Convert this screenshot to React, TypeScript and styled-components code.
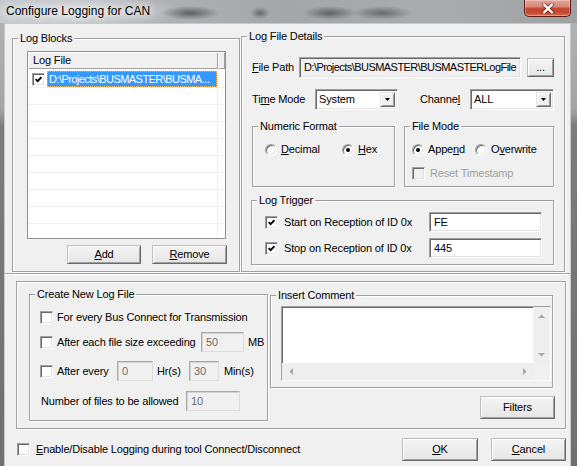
import React from "react";
import styled, { createGlobalStyle } from "styled-components";

const GlobalStyle = createGlobalStyle`
  html, body { margin: 0; padding: 0; }
  body { background: #6e6e6e; font-family: "Liberation Sans", Arial, sans-serif; }
  *, *::before, *::after { box-sizing: border-box; }
  u { text-decoration: underline; text-underline-offset: 1px; }
`;

const Window = styled.div`
  width: 577px;
  height: 466px;
  display: flex;
  flex-direction: column;
  overflow: hidden;
  background: linear-gradient(180deg, #b4b5b6 0px, #a3a4a5 110px, #7b7c7d 126px, #6f7071 100%);
`;

const TitleBar = styled.div`
  height: 23px;
  flex: none;
  display: flex;
  align-items: flex-start;
  background:
    radial-gradient(30px 7px at 190px 13px, rgba(40, 40, 40, 0.6), rgba(40, 40, 40, 0)),
    radial-gradient(10px 6px at 260px 13px, rgba(40, 40, 40, 0.5), rgba(40, 40, 40, 0)),
    radial-gradient(27px 7px at 330px 13px, rgba(40, 40, 40, 0.55), rgba(40, 40, 40, 0)),
    radial-gradient(30px 7px at 382px 13px, rgba(40, 40, 40, 0.5), rgba(40, 40, 40, 0)),
    radial-gradient(110px 18px at 75px 12px, rgba(226, 229, 231, 0.95), rgba(226, 229, 231, 0)),
    linear-gradient(90deg, #c3c6c8 0%, #b0b3b5 26%, #a4a6a8 50%, #aaacae 75%, #9fa1a3 100%);
`;

const TitleText = styled.div`
  flex: 1;
  padding-left: 6px;
  line-height: 23px;
  font-size: 12px;
  color: #000;
  white-space: nowrap;
  text-shadow: 0 0 6px rgba(255, 255, 255, 0.9), 0 0 10px rgba(255, 255, 255, 0.7);
`;

const CloseButton = styled.div`
  width: 47px;
  height: 17px;
  flex: none;
  margin-right: 6px;
  display: flex;
  align-items: center;
  justify-content: center;
  border: 1px solid #5e1d14;
  border-top: none;
  border-radius: 0 0 5px 5px;
  background: linear-gradient(180deg, #e3a397 0%, #d98a79 40%, #c2442b 55%, #c54a31 80%, #d6755c 100%);
  box-shadow: inset 0 0 0 1px rgba(255, 255, 255, 0.3);
`;

const Body = styled.div`
  flex: 1;
  min-height: 0;
  display: flex;
  padding: 0 6px 0 4px;
`;

const Client = styled.div`
  flex: 1;
  display: flex;
  flex-direction: column;
  background: #f0f0f0;
  border: 1px solid #c8c9ca;
  border-bottom: none;
  font-size: 11px;
  line-height: 13px;
  letter-spacing: -0.15px;
  color: #000;
`;

const TopPanel = styled.div`
  height: 250px;
  flex: none;
  display: flex;
  align-items: flex-end;
  gap: 1px;
  padding: 0 5px 1px 7px;
  border-bottom: 1px solid #a0a0a0;
  box-shadow: 0 1px 0 #fff;
`;

const GroupBox = styled.div<{ $w: number; $h: number; $mt?: number; $ml?: number }>`
  width: ${(p) => p.$w}px;
  height: ${(p) => p.$h}px;
  margin-top: ${(p) => p.$mt ?? 0}px;
  margin-left: ${(p) => p.$ml ?? 0}px;
  flex: none;
  display: flex;
  flex-direction: column;
  border: 1px solid #a0a0a0;
  box-shadow: inset 1px 1px 0 #fff, 1px 1px 0 #fff;
`;

const Legend = styled.div`
  align-self: flex-start;
  margin: -7px 0 0 5px;
  padding: 0 2px;
  line-height: 13px;
  background: #f0f0f0;
  white-space: nowrap;
`;

const GroupContent = styled.div<{ $p: string }>`
  padding: ${(p) => p.$p};
  display: flex;
  flex-direction: column;
  flex: 1;
  min-height: 0;
`;

const ListView = styled.div`
  width: 199px;
  height: 188px;
  flex: none;
  display: flex;
  flex-direction: column;
  background: #fff;
  border: 1px solid #8e8f8f;
  overflow: hidden;
`;

const ListHeader = styled.div`
  display: flex;
  height: 17px;
  flex: none;
`;

const HeaderCell = styled.div<{ $w?: number }>`
  ${(p) => (p.$w ? `width: ${p.$w}px; flex: none;` : "flex: 1;")}
  height: 100%;
  padding-left: 5px;
  display: flex;
  align-items: center;
  background: #f0f0f0;
  box-shadow: inset 1px 1px 0 #fff, inset -1px -1px 0 #a0a0a0;
`;

const ListBody = styled.div`
  display: flex;
  flex-direction: column;
  padding-top: 2px;
`;

const ListRow = styled.div`
  display: flex;
  height: 17px;
  flex: none;
  border-bottom: 1px solid #f0f0f0;
`;

const ListCell = styled.div<{ $w?: number }>`
  ${(p) => (p.$w ? `width: ${p.$w}px; flex: none; border-right: 1px solid #f0f0f0;` : "flex: 1;")}
  display: flex;
  align-items: center;
  padding-left: 4px;
  min-width: 0;
`;

const SelectedText = styled.div`
  flex: 1;
  min-width: 0;
  height: 16px;
  margin-left: 2px;
  padding-left: 2px;
  display: flex;
  align-items: center;
  background: #3399ff;
  color: #fff;
  letter-spacing: -0.55px;
  white-space: nowrap;
  overflow: hidden;
  outline: 1px dotted #f6b565;
  outline-offset: -1px;
`;

const ButtonRow = styled.div`
  display: flex;
  gap: 11px;
  margin-top: 6px;
  padding-left: 40px;
`;

const Button = styled.div<{ $w: number; $h: number; $ml?: number | "auto" }>`
  width: ${(p) => p.$w}px;
  height: ${(p) => p.$h}px;
  margin-left: ${(p) => (p.$ml === "auto" ? "auto" : `${p.$ml ?? 0}px`)};
  flex: none;
  display: flex;
  align-items: center;
  justify-content: center;
  background: linear-gradient(180deg, #f4f4f4, #e6e6e6);
  border: 1px solid;
  border-color: #bdbdbd #6a6a6a #6a6a6a #bdbdbd;
  box-shadow: inset 1px 1px 0 #fff, inset -1px -1px 0 #a0a0a0;
  white-space: nowrap;
`;

const FieldRow = styled.div<{ $mt?: number; $pl?: number; $h?: number }>`
  display: flex;
  align-items: center;
  height: ${(p) => p.$h ?? 20}px;
  margin-top: ${(p) => p.$mt ?? 0}px;
  padding-left: ${(p) => p.$pl ?? 0}px;
  flex: none;
`;

const Text = styled.span<{ $w?: number; $ml?: number; $disabled?: boolean }>`
  ${(p) => (p.$w ? `width: ${p.$w}px; flex: none;` : "")}
  margin-left: ${(p) => p.$ml ?? 0}px;
  color: ${(p) => (p.$disabled ? "#a0a0a0" : "#000")};
  white-space: nowrap;
`;

const TextField = styled.div<{ $w: number; $h: number; $disabled?: boolean; $readonly?: boolean; $tight?: boolean }>`
  width: ${(p) => p.$w}px;
  height: ${(p) => p.$h}px;
  flex: none;
  display: flex;
  align-items: center;
  padding: 0 4px;
  overflow: hidden;
  white-space: nowrap;
  letter-spacing: ${(p) => (p.$tight ? "-0.55px" : "inherit")};
  background: ${(p) => (p.$disabled || p.$readonly ? "#f0f0f0" : "#fff")};
  color: ${(p) => (p.$disabled ? "#6d6d6d" : "#000")};
  border: 1px solid;
  border-color: ${(p) => (p.$disabled ? "#a9a9a9 #dcdcdc #dcdcdc #a9a9a9" : "#a0a0a0 #fff #fff #a0a0a0")};
  box-shadow: ${(p) =>
    p.$disabled ? "inset 1px 1px 0 #d4d4d4" : "inset 1px 1px 0 #696969, inset -1px -1px 0 #e3e3e3"};
`;

const Combo = styled.div<{ $w: number; $ml?: number }>`
  width: ${(p) => p.$w}px;
  height: 21px;
  margin-left: ${(p) => p.$ml ?? 0}px;
  flex: none;
  display: flex;
  align-items: stretch;
  padding: 2px;
  background: #fff;
  border: 1px solid;
  border-color: #a0a0a0 #fff #fff #a0a0a0;
  box-shadow: inset 1px 1px 0 #696969, inset -1px -1px 0 #e3e3e3;
`;

const ComboText = styled.span`
  flex: 1;
  padding-left: 1px;
  display: flex;
  align-items: center;
`;

const DropButton = styled.span`
  width: 15px;
  flex: none;
  display: flex;
  align-items: center;
  justify-content: center;
  background: #f0f0f0;
  border: 1px solid;
  border-color: #e3e3e3 #696969 #696969 #e3e3e3;
  box-shadow: inset 1px 1px 0 #fff, inset -1px -1px 0 #a0a0a0;
`;

const GroupsRow = styled.div`
  display: flex;
  gap: 9px;
  margin-top: 16px;
  flex: none;
`;

const RadioOption = styled.div<{ $w?: number }>`
  display: flex;
  align-items: center;
  gap: 4px;
  ${(p) => (p.$w ? `width: ${p.$w}px; flex: none;` : "")}
`;

const RadioCircle = styled.span<{ $on?: boolean }>`
  width: 12px;
  height: 12px;
  flex: none;
  border-radius: 50%;
  background: #fff;
  border: 1px solid;
  border-color: #a0a0a0 #fff #fff #a0a0a0;
  box-shadow: inset 1px 1px 0 #696969, inset -1px -1px 0 #e3e3e3;
  display: flex;
  align-items: center;
  justify-content: center;
  &::after {
    content: "";
    width: 4px;
    height: 4px;
    border-radius: 50%;
    background: #000;
    display: ${(p) => (p.$on ? "block" : "none")};
  }
`;

const CheckBox = styled.span<{ $disabled?: boolean }>`
  width: 13px;
  height: 13px;
  flex: none;
  display: flex;
  align-items: center;
  justify-content: center;
  background: ${(p) => (p.$disabled ? "#f0f0f0" : "#fff")};
  border: 1px solid;
  border-color: #a0a0a0 #fff #fff #a0a0a0;
  box-shadow: inset 1px 1px 0 #696969, inset -1px -1px 0 #e3e3e3;
`;

const BottomPanel = styled.div`
  width: 550px;
  height: 148px;
  flex: none;
  margin: 7px 0 0 11px;
  display: flex;
  align-items: flex-start;
  gap: 2px;
  padding-left: 12px;
  border: 1px solid #a0a0a0;
  box-shadow: inset 1px 1px 0 #fff, 1px 1px 0 #fff;
`;

const RightColumn = styled.div`
  width: 285px;
  flex: none;
  margin-top: 13px;
  display: flex;
  flex-direction: column;
  align-items: flex-start;
`;

const CommentArea = styled.div`
  width: 270px;
  height: 75px;
  flex: none;
  display: flex;
  flex-direction: column;
  background: #fff;
  border: 1px solid;
  border-color: #a0a0a0 #fff #fff #a0a0a0;
  box-shadow: inset 1px 1px 0 #696969, inset -1px -1px 0 #e3e3e3;
`;

const CommentMain = styled.div`
  flex: 1;
  display: flex;
  justify-content: flex-end;
`;

const VScroll = styled.div`
  width: 17px;
  display: flex;
  flex-direction: column;
  justify-content: space-between;
  background: #eeeeee;
`;

const HScrollRow = styled.div`
  height: 17px;
  flex: none;
  display: flex;
`;

const HScroll = styled.div`
  flex: 1;
  display: flex;
  justify-content: space-between;
  background: #eeeeee;
`;

const ScrollBtn = styled.span`
  width: 17px;
  height: 17px;
  flex: none;
  display: flex;
  align-items: center;
  justify-content: center;
`;

const ScrollCorner = styled.span`
  width: 17px;
  flex: none;
  background: #f0f0f0;
`;

const FiltersWrap = styled.div`
  align-self: flex-end;
  margin-top: 8px;
`;

const Footer = styled.div`
  flex: 1;
  display: flex;
  align-items: flex-start;
  padding: 9px 4px 0 12px;
`;

const FooterCheck = styled.div`
  height: 23px;
  display: flex;
  align-items: center;
  gap: 6px;
`;

const CheckMark = () => (
  <svg width="7" height="7" viewBox="0 0 7 7">
    <path d="M0.6 3.2 L2.6 5.2 L6.4 1.2" fill="none" stroke="#000" strokeWidth="1.8" />
  </svg>
);

const DropArrow = () => (
  <svg width="5" height="3" viewBox="0 0 5 3">
    <polygon points="0,0 5,0 2.5,3" fill="#000" />
  </svg>
);

const ScrollArrow = ({ dir }: { dir: "up" | "down" | "left" | "right" }) => {
  const vertical = dir === "up" || dir === "down";
  const pts = {
    up: "0,4 7,4 3.5,0.5",
    down: "0,0 7,0 3.5,3.5",
    left: "4,0 4,7 0.5,3.5",
    right: "0,0 0,7 3.5,3.5",
  }[dir];
  return (
    <svg width={vertical ? 7 : 4} height={vertical ? 4 : 7} viewBox={`0 0 ${vertical ? 7 : 4} ${vertical ? 4 : 7}`}>
      <polygon points={pts} fill="#a6a6a6" />
    </svg>
  );
};

const CloseGlyph = () => (
  <svg width="14" height="11" viewBox="0 0 14 11">
    <path d="M3 1.5 L11 9.5 M11 1.5 L3 9.5" stroke="#4a1a14" strokeOpacity="0.6" strokeWidth="4.2" strokeLinecap="round" />
    <path d="M3 1.5 L11 9.5 M11 1.5 L3 9.5" stroke="#fff" strokeWidth="2.4" strokeLinecap="round" />
  </svg>
);

export default function App() {
  return (
    <>
      <GlobalStyle />
      <Window>
        <TitleBar>
          <TitleText>Configure Logging for CAN</TitleText>
          <CloseButton>
            <CloseGlyph />
          </CloseButton>
        </TitleBar>
        <Body>
          <Client>
            <TopPanel>
              <GroupBox $w={228} $h={234}>
                <Legend>Log Blocks</Legend>
                <GroupContent $p="6px 0 0 14px">
                  <ListView>
                    <ListHeader>
                      <HeaderCell $w={190}>Log File</HeaderCell>
                      <HeaderCell />
                    </ListHeader>
                    <ListBody>
                      <ListRow>
                        <ListCell $w={190}>
                          <CheckBox>
                            <CheckMark />
                          </CheckBox>
                          <SelectedText>D:\Projects\BUSMASTER\BUSMA...</SelectedText>
                        </ListCell>
                        <ListCell />
                      </ListRow>
                      {Array.from({ length: 10 }).map((_, i) => (
                        <ListRow key={i}>
                          <ListCell $w={190} />
                          <ListCell />
                        </ListRow>
                      ))}
                    </ListBody>
                  </ListView>
                  <ButtonRow>
                    <Button $w={74} $h={19}>
                      <span>
                        <u>A</u>dd
                      </span>
                    </Button>
                    <Button $w={75} $h={19}>
                      <span>
                        <u>R</u>emove
                      </span>
                    </Button>
                  </ButtonRow>
                </GroupContent>
              </GroupBox>

              <GroupBox $w={324} $h={236}>
                <Legend>Log File Details</Legend>
                <GroupContent $p="14px 0 0 10px">
                  <FieldRow $h={21}>
                    <Text $w={47}>
                      <u>F</u>ile Path
                    </Text>
                    <TextField $w={222} $h={21} $readonly $tight>
                      D:\Projects\BUSMASTER\BUSMASTERLogFile
                    </TextField>
                    <Button $w={27} $h={19} $ml={6}>
                      ...
                    </Button>
                  </FieldRow>
                  <FieldRow $h={21} $mt={11}>
                    <Text $w={63}>
                      Ti<u>m</u>e Mode
                    </Text>
                    <Combo $w={83}>
                      <ComboText>System</ComboText>
                      <DropButton>
                        <DropArrow />
                      </DropButton>
                    </Combo>
                    <Text $w={50} $ml={22}>
                      Channe<u>l</u>
                    </Text>
                    <Combo $w={84}>
                      <ComboText>ALL</ComboText>
                      <DropButton>
                        <DropArrow />
                      </DropButton>
                    </Combo>
                  </FieldRow>
                  <GroupsRow>
                    <GroupBox $w={143} $h={61}>
                      <Legend>Numeric Format</Legend>
                      <GroupContent $p="10px 0 0 12px">
                        <FieldRow $h={13}>
                          <RadioOption $w={77}>
                            <RadioCircle />
                            <Text>
                              <u>D</u>ecimal
                            </Text>
                          </RadioOption>
                          <RadioOption>
                            <RadioCircle $on />
                            <Text>
                              <u>H</u>ex
                            </Text>
                          </RadioOption>
                        </FieldRow>
                      </GroupContent>
                    </GroupBox>
                    <GroupBox $w={150} $h={61}>
                      <Legend>File Mode</Legend>
                      <GroupContent $p="10px 0 0 7px">
                        <FieldRow $h={13}>
                          <RadioOption $w={63}>
                            <RadioCircle $on />
                            <Text>
                              Appe<u>n</u>d
                            </Text>
                          </RadioOption>
                          <RadioOption>
                            <RadioCircle />
                            <Text>
                              O<u>v</u>erwrite
                            </Text>
                          </RadioOption>
                        </FieldRow>
                        <FieldRow $h={13} $mt={11}>
                          <CheckBox $disabled />
                          <Text $ml={5} $disabled>
                            Reset Timestamp
                          </Text>
                        </FieldRow>
                      </GroupContent>
                    </GroupBox>
                  </GroupsRow>
                  <GroupBox $w={303} $h={65} $mt={13} $ml={-1}>
                    <Legend>Log Trigger</Legend>
                    <GroupContent $p="5px 0 0 13px">
                      <FieldRow>
                        <CheckBox>
                          <CheckMark />
                        </CheckBox>
                        <Text $w={145} $ml={6}>
                          Start on Reception of ID 0x
                        </Text>
                        <TextField $w={113} $h={20}>
                          FE
                        </TextField>
                      </FieldRow>
                      <FieldRow $mt={6}>
                        <CheckBox>
                          <CheckMark />
                        </CheckBox>
                        <Text $w={145} $ml={6}>
                          Stop on Reception of ID 0x
                        </Text>
                        <TextField $w={113} $h={20}>
                          445
                        </TextField>
                      </FieldRow>
                    </GroupContent>
                  </GroupBox>
                </GroupContent>
              </GroupBox>
            </TopPanel>

            <BottomPanel>
              <GroupBox $w={239} $h={127} $mt={12}>
                <Legend>Create New Log File</Legend>
                <GroupContent $p="0 0 0 10px">
                  <FieldRow $mt={6}>
                    <CheckBox />
                    <Text $ml={4}>For every Bus Connect for Transmission</Text>
                  </FieldRow>
                  <FieldRow $mt={5}>
                    <CheckBox />
                    <Text $w={144} $ml={4}>
                      After each file size exceeding
                    </Text>
                    <TextField $w={43} $h={20} $disabled>
                      50
                    </TextField>
                    <Text $ml={4}>MB</Text>
                  </FieldRow>
                  <FieldRow $mt={9}>
                    <CheckBox />
                    <Text $w={60} $ml={4}>
                      After every
                    </Text>
                    <TextField $w={36} $h={20} $disabled>
                      0
                    </TextField>
                    <Text $w={32} $ml={4}>
                      Hr(s)
                    </Text>
                    <TextField $w={30} $h={20} $disabled>
                      30
                    </TextField>
                    <Text $ml={5}>Min(s)</Text>
                  </FieldRow>
                  <FieldRow $mt={10} $pl={1}>
                    <Text $w={145}>Number of files to be allowed</Text>
                    <TextField $w={54} $h={20} $disabled>
                      10
                    </TextField>
                  </FieldRow>
                </GroupContent>
              </GroupBox>

              <RightColumn>
                <GroupBox $w={283} $h={93}>
                  <Legend>Insert Comment</Legend>
                  <GroupContent $p="4px 0 0 10px">
                    <CommentArea>
                      <CommentMain>
                        <VScroll>
                          <ScrollBtn>
                            <ScrollArrow dir="up" />
                          </ScrollBtn>
                          <ScrollBtn>
                            <ScrollArrow dir="down" />
                          </ScrollBtn>
                        </VScroll>
                      </CommentMain>
                      <HScrollRow>
                        <HScroll>
                          <ScrollBtn>
                            <ScrollArrow dir="left" />
                          </ScrollBtn>
                          <ScrollBtn>
                            <ScrollArrow dir="right" />
                          </ScrollBtn>
                        </HScroll>
                        <ScrollCorner />
                      </HScrollRow>
                    </CommentArea>
                  </GroupContent>
                </GroupBox>
                <FiltersWrap>
                  <Button $w={75} $h={23}>
                    Filters
                  </Button>
                </FiltersWrap>
              </RightColumn>
            </BottomPanel>

            <Footer>
              <FooterCheck>
                <CheckBox />
                <Text>
                  <u>E</u>nable/Disable Logging during tool Connect/Disconnect
                </Text>
              </FooterCheck>
              <Button $w={76} $h={23} $ml="auto">
                <span>
                  <u>O</u>K
                </span>
              </Button>
              <Button $w={75} $h={23} $ml={13}>
                <span>
                  <u>C</u>ancel
                </span>
              </Button>
            </Footer>
          </Client>
        </Body>
      </Window>
    </>
  );
}
